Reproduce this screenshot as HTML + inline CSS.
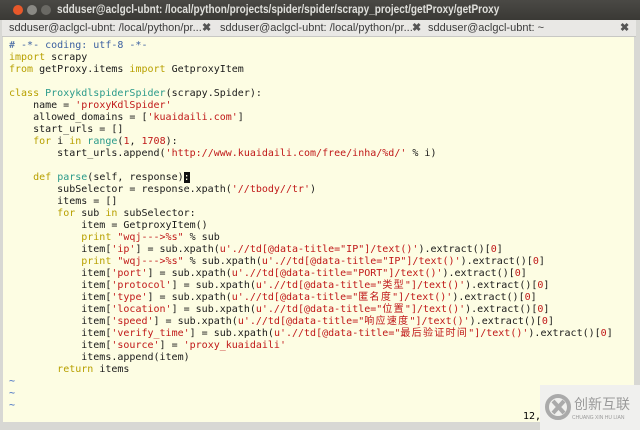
<!DOCTYPE html>
<html><head><meta charset="utf-8"><style>
body{margin:0;width:640px;height:430px;background:#d8d8d4;overflow:hidden;position:relative;font-family:"Liberation Sans",sans-serif}
.title{position:absolute;left:0;top:0;width:640px;height:20px;background:linear-gradient(#4a4945,#3a3935);color:#e0e0dc;font-size:11.5px;font-weight:bold;line-height:20px}
.title span{position:absolute;left:57px;transform:scaleX(0.87);transform-origin:0 0;white-space:nowrap}
.dot{position:absolute;top:5px;width:10px;height:10px;border-radius:50%}
.tabs{position:absolute;left:2px;top:20px;width:634px;height:16px;background:#e9e8e5;font-size:11px;color:#3c3c3c;line-height:16px;border-bottom:1px solid #c8c8c4}
.tab{position:absolute;top:0;height:16px;white-space:nowrap}
.x{position:absolute;font-size:11px;color:#555;font-weight:bold}
.term{position:absolute;left:3px;top:37px;width:631px;height:385px;background:#fdfde3}
pre{margin:0;position:absolute;left:6px;top:3px;font-family:"DejaVu Sans Mono","Noto Sans CJK SC",monospace;font-size:10px;line-height:12px;color:#1a1a1a}
.c{color:#3a5fa0}.k{color:#b8a000}.f{color:#2a9a8a}.s{color:#c01818}.t{color:#3060c0}
.z{letter-spacing:1.3px}
.cur{background:#111;color:#fdfde3}
.wm{position:absolute;left:540px;top:385px;width:100px;height:45px;background:#f0f0ee;color:#9a9a9a;font-family:"Noto Sans CJK SC",sans-serif;font-size:14px}
</style></head><body>
<div class="title"><div class="dot" style="left:13px;background:#e8582a"></div><div class="dot" style="left:27px;background:#8a8984"></div><div class="dot" style="left:41px;background:#6a6964"></div><span>sdduser@aclgcl-ubnt: /local/python/projects/spider/spider/scrapy_project/getProxy/getProxy</span></div>
<div class="tabs">
<div class="tab" style="left:7px">sdduser@aclgcl-ubnt: /local/python/pr...</div><div class="x" style="left:200px">✖</div>
<div class="tab" style="left:218px">sdduser@aclgcl-ubnt: /local/python/pr...</div><div class="x" style="left:410px">✖</div>
<div class="tab" style="left:426px">sdduser@aclgcl-ubnt: ~</div><div class="x" style="left:618px">✖</div>
</div>
<div class="term"><pre><span class="c"># -*- coding: utf-8 -*-</span>
<span class="k">import</span> scrapy
<span class="k">from</span> getProxy.items <span class="k">import</span> GetproxyItem

<span class="k">class</span> <span class="f">ProxykdlspiderSpider</span>(scrapy.Spider):
    name = <span class="s">'proxyKdlSpider'</span>
    allowed_domains = [<span class="s">'kuaidaili.com'</span>]
    start_urls = []
    <span class="k">for</span> i <span class="k">in</span> <span class="f">range</span>(<span class="s">1</span>, <span class="s">1708</span>):
        start_urls.append(<span class="s">'http://www.kuaidaili.com/free/inha/%d/'</span> % i)

    <span class="k">def</span> <span class="f">parse</span>(self, response)<span class="cur">:</span>
        subSelector = response.xpath(<span class="s">'//tbody//tr'</span>)
        items = []
        <span class="k">for</span> sub <span class="k">in</span> subSelector:
            item = GetproxyItem()
            <span class="k">print</span> <span class="s">"wqj---&gt;%s"</span> % sub
            item[<span class="s">'ip'</span>] = sub.xpath(<span class="s">u'.//td[@data-title="IP"]/text()'</span>).extract()[<span class="s">0</span>]
            <span class="k">print</span> <span class="s">"wqj---&gt;%s"</span> % sub.xpath(<span class="s">u'.//td[@data-title="IP"]/text()'</span>).extract()[<span class="s">0</span>]
            item[<span class="s">'port'</span>] = sub.xpath(<span class="s">u'.//td[@data-title="PORT"]/text()'</span>).extract()[<span class="s">0</span>]
            item[<span class="s">'protocol'</span>] = sub.xpath(<span class="s">u'.//td[@data-title="<span class="z">类型</span>"]/text()'</span>).extract()[<span class="s">0</span>]
            item[<span class="s">'type'</span>] = sub.xpath(<span class="s">u'.//td[@data-title="<span class="z">匿名度</span>"]/text()'</span>).extract()[<span class="s">0</span>]
            item[<span class="s">'location'</span>] = sub.xpath(<span class="s">u'.//td[@data-title="<span class="z">位置</span>"]/text()'</span>).extract()[<span class="s">0</span>]
            item[<span class="s">'speed'</span>] = sub.xpath(<span class="s">u'.//td[@data-title="<span class="z">响应速度</span>"]/text()'</span>).extract()[<span class="s">0</span>]
            item[<span class="s">'verify_time'</span>] = sub.xpath(<span class="s">u'.//td[@data-title="<span class="z">最后验证时间</span>"]/text()'</span>).extract()[<span class="s">0</span>]
            item[<span class="s">'source'</span>] = <span class="s">'proxy_kuaidaili'</span>
            items.append(item)
        <span class="k">return</span> items
<span class="t">~</span>
<span class="t">~</span>
<span class="t">~</span>
</pre><div style="position:absolute;left:520px;top:374px;font-family:'DejaVu Sans Mono',monospace;font-size:10px">12,</div></div>
<div class="wm"><svg width="28" height="28" viewBox="0 0 28 28" style="position:absolute;left:4px;top:8px"><circle cx="14" cy="14" r="11" fill="none" stroke="#aaa" stroke-width="4"/><path d="M9 8 L20 20 M20 8 L9 20" stroke="#aaa" stroke-width="4"/></svg><span style="position:absolute;left:34px;top:9px">创新互联</span><span style="position:absolute;left:32px;top:30px;font-size:5px;font-family:'Liberation Sans',sans-serif">CHUANG XIN HU LIAN</span></div>
</body></html>
